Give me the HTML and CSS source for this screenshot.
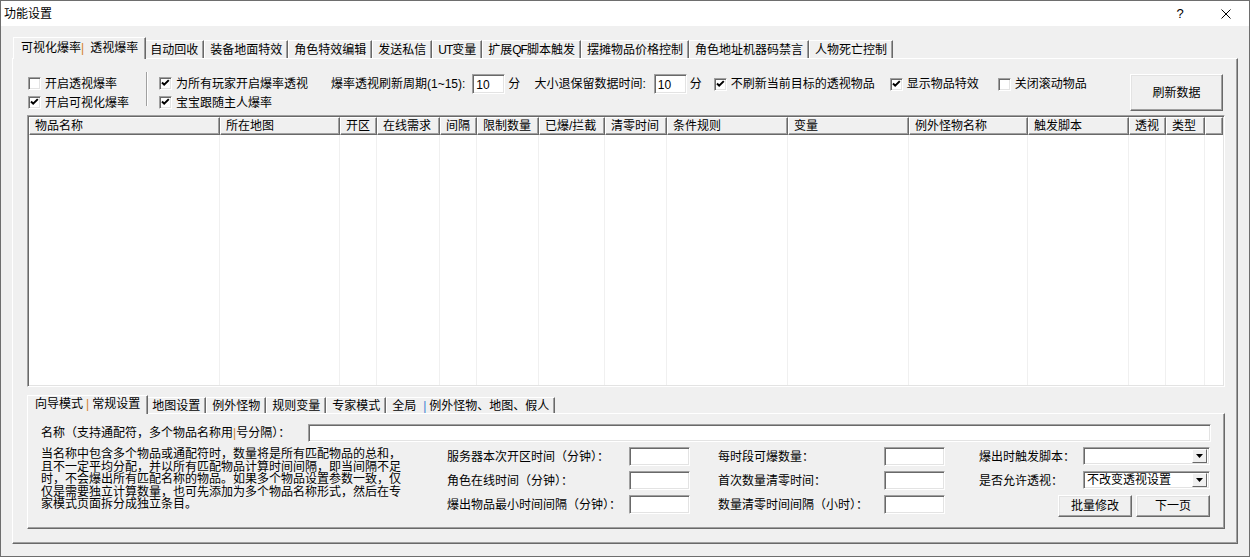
FILE: index.html
```html
<!DOCTYPE html>
<html lang="zh-CN">
<head>
    <meta charset="UTF-8">
    <title>功能设置</title>
    <link rel="stylesheet" href="styles.css">
</head>
<body>
<div class="window">
    <div class="titlebar">
        <span class="title">功能设置</span>
        <span class="cap-btn">?</span>
        <span class="cap-btn">
            <svg width="10" height="10" viewBox="0 0 10 10"><path d="M0.5 0.5 L9.5 9.5 M9.5 0.5 L0.5 9.5" stroke="#000" stroke-width="1" fill="none"/></svg>
        </span>
    </div>

    <div class="client">
        <div class="tabs outer-tabs">
            <div class="tab active">可视化爆率<span class="pipe wide">|</span>透视爆率</div>
            <div class="tab">自动回收</div>
            <div class="tab">装备地面特效</div>
            <div class="tab">角色特效编辑</div>
            <div class="tab">发送私信</div>
            <div class="tab"><span class="latin">UT</span>变量</div>
            <div class="tab">扩展<span class="latin">QF</span>脚本触发</div>
            <div class="tab">摆摊物品价格控制</div>
            <div class="tab">角色地址机器码禁言</div>
            <div class="tab">人物死亡控制</div>
        </div>

        <div class="page outer-page">
            <div class="options">
                <div class="check-col first-col">
                    <label class="check"><span class="box"></span>开启透视爆率</label>
                    <label class="check"><span class="box"><svg width="9" height="9" viewBox="0 0 9 9"><path d="M1 3.5 L3.2 5.7 L7.8 1.1" stroke="#000" stroke-width="2" fill="none"/></svg></span>开启可视化爆率</label>
                </div>
                <div class="vsep"></div>
                <div class="check-col second-col">
                    <label class="check"><span class="box"><svg width="9" height="9" viewBox="0 0 9 9"><path d="M1 3.5 L3.2 5.7 L7.8 1.1" stroke="#000" stroke-width="2" fill="none"/></svg></span>为所有玩家开启爆率透视</label>
                    <label class="check"><span class="box"><svg width="9" height="9" viewBox="0 0 9 9"><path d="M1 3.5 L3.2 5.7 L7.8 1.1" stroke="#000" stroke-width="2" fill="none"/></svg></span>宝宝跟随主人爆率</label>
                </div>
                <div class="opt-line">
                    <span>爆率透视刷新周期(1~15):</span>
                    <span class="edit num">10</span>
                    <span class="unit">分</span>
                    <span class="keep-label">大小退保留数据时间:</span>
                    <span class="edit num keep">10</span>
                    <span class="unit">分</span>
                    <label class="check inline c1"><span class="box"><svg width="9" height="9" viewBox="0 0 9 9"><path d="M1 3.5 L3.2 5.7 L7.8 1.1" stroke="#000" stroke-width="2" fill="none"/></svg></span>不刷新当前目标的透视物品</label>
                    <label class="check inline c2"><span class="box"><svg width="9" height="9" viewBox="0 0 9 9"><path d="M1 3.5 L3.2 5.7 L7.8 1.1" stroke="#000" stroke-width="2" fill="none"/></svg></span>显示物品特效</label>
                    <label class="check inline c3"><span class="box"></span>关闭滚动物品</label>
                </div>
                <button class="btn refresh">刷新数据</button>
            </div>

            <div class="list">
                <div class="list-head">
                    <div class="th">物品名称</div>
                    <div class="th">所在地图</div>
                    <div class="th">开区</div>
                    <div class="th">在线需求</div>
                    <div class="th">间隔</div>
                    <div class="th">限制数量</div>
                    <div class="th">已爆/拦截</div>
                    <div class="th">清零时间</div>
                    <div class="th">条件规则</div>
                    <div class="th">变量</div>
                    <div class="th">例外怪物名称</div>
                    <div class="th">触发脚本</div>
                    <div class="th">透视</div>
                    <div class="th">类型</div>
                    <div class="th filler"></div>
                </div>
                <div class="list-body">
                    <div class="td"></div><div class="td"></div><div class="td"></div>
                    <div class="td"></div><div class="td"></div><div class="td"></div>
                    <div class="td"></div><div class="td"></div><div class="td"></div>
                    <div class="td"></div><div class="td"></div><div class="td"></div>
                    <div class="td"></div><div class="td"></div><div class="td last"></div>
                </div>
            </div>

            <div class="tabs inner-tabs">
                <div class="tab active">向导模式<span class="pipe">|</span>常规设置</div>
                <div class="tab">地图设置</div>
                <div class="tab">例外怪物</div>
                <div class="tab">规则变量</div>
                <div class="tab">专家模式</div>
                <div class="tab">全局<span class="pipe blue">|</span>例外怪物、地图、假人</div>
            </div>

            <div class="page inner-page">
                <div class="name-row">
                    <span class="name-label">名称（支持通配符，多个物品名称用<span class="pipe tight">|</span>号分隔）：</span>
                    <span class="edit name-edit"></span>
                </div>
                <div class="fields">
                    <p class="note">当名称中包含多个物品或通配符时，数量将是所有匹配物品的总和，且不一定平均分配，并以所有匹配物品计算时间间隔，即当间隔不足时，不会爆出所有匹配名称的物品。如果多个物品设置参数一致，仅仅是需要独立计算数量，也可先添加为多个物品名称形式，然后在专家模式页面拆分成独立条目。</p>
                    <div class="field-col col-b">
                        <span>服务器本次开区时间（分钟）：</span><span class="edit"></span>
                        <span>角色在线时间（分钟）：</span><span class="edit"></span>
                        <span>爆出物品最小时间间隔（分钟）：</span><span class="edit"></span>
                    </div>
                    <div class="field-col col-c">
                        <span>每时段可爆数量：</span><span class="edit"></span>
                        <span>首次数量清零时间：</span><span class="edit"></span>
                        <span>数量清零时间间隔（小时）：</span><span class="edit"></span>
                    </div>
                    <div class="field-col col-d">
                        <span>爆出时触发脚本：</span>
                        <span class="edit combo"><span class="combo-text"></span><span class="drop"><svg width="7" height="4" viewBox="0 0 7 4"><path d="M0 0 H7 L3.5 4 Z" fill="#000"/></svg></span></span>
                        <span>是否允许透视：</span>
                        <span class="edit combo"><span class="combo-text">不改变透视设置</span><span class="drop"><svg width="7" height="4" viewBox="0 0 7 4"><path d="M0 0 H7 L3.5 4 Z" fill="#000"/></svg></span></span>
                        <div class="actions">
                            <button class="btn">批量修改</button>
                            <button class="btn">下一页</button>
                        </div>
                    </div>
                </div>
            </div>
        </div>
    </div>
</div>
</body>
</html>
```

FILE: styles.css
```css
* {
    margin: 0;
    padding: 0;
    box-sizing: border-box;
}

body {
    width: 1250px;
    height: 557px;
    overflow: hidden;
    background: #f0f0f0;
    font-family: "Liberation Sans", "Noto Sans CJK SC", sans-serif;
    font-size: 12px;
    line-height: 14px;
    color: #000;
}

.window {
    width: 1250px;
    height: 557px;
    border: 1px solid #6e6e6e;
    display: flex;
    flex-direction: column;
}

/* title bar */
.titlebar {
    height: 25px;
    background: #fff;
    display: flex;
    align-items: center;
    padding-left: 3px;
}

.title {
    flex-grow: 1;
}

.cap-btn {
    width: 46px;
    height: 25px;
    display: flex;
    align-items: center;
    justify-content: center;
    font-size: 13px;
}

.client {
    flex-grow: 1;
    display: flex;
    flex-direction: column;
    padding: 11px 11px 12px 11px;
}

/* shared 3d borders */
.edit {
    display: inline-block;
    background: #fff;
    border: 1px solid;
    border-color: #a0a0a0 #fff #fff #a0a0a0;
    box-shadow: inset 1px 1px #696969, inset -1px -1px #e3e3e3;
}

.btn {
    font: inherit;
    background: #f0f0f0;
    border: 1px solid;
    border-color: #fff #696969 #696969 #fff;
    box-shadow: inset -1px -1px #a0a0a0, inset 1px 1px #e3e3e3;
    color: #000;
}

.page {
    border: 1px solid;
    border-color: #fff #696969 #696969 #fff;
    box-shadow: inset -1px -1px #a0a0a0;
}

/* tabs */
.tabs {
    display: flex;
    align-items: flex-end;
}

.tab {
    height: 18px;
    padding: 0 5px;
    display: flex;
    align-items: center;
    white-space: nowrap;
    border: 1px solid;
    border-bottom: none;
    border-color: #fff #696969 #fff #fff;
    box-shadow: inset -1px 0 #a0a0a0;
}

.tab.active {
    position: relative;
    height: 22px;
    margin: 0 -2px -1px -2px;
    padding: 0 7px 1px 7px;
    background: #f0f0f0;
}

.latin {
    letter-spacing: -1px;
}

.outer-tabs {
    height: 21px;
    padding-left: 3px;
}

.pipe {
    color: #d4822c;
    margin: 0 3px;
}

.pipe.wide {
    margin: 0 6px 0 0;
}

.pipe.tight {
    margin: 0;
}

.pipe.blue {
    color: #3d7fd1;
    margin: 0 3px 0 7px;
}

.outer-page {
    flex-grow: 1;
    display: flex;
    flex-direction: column;
    padding: 15px 12px 14px 14px;
}

/* option row */
.options {
    height: 41px;
    display: flex;
    align-items: flex-start;
}

.check-col {
    display: flex;
    flex-direction: column;
}

.first-col {
    width: 118px;
    margin-left: 1px;
}

.second-col {
    width: 172px;
    margin-left: 11px;
}

.check {
    height: 19px;
    display: flex;
    align-items: center;
    white-space: nowrap;
}

.box {
    width: 13px;
    height: 13px;
    margin-right: 4px;
    background: #fff;
    border: 1px solid;
    border-color: #a0a0a0 #fff #fff #a0a0a0;
    box-shadow: inset 1px 1px #696969, inset -1px -1px #e3e3e3;
    display: flex;
    align-items: center;
    justify-content: center;
}

.vsep {
    width: 2px;
    height: 34px;
    margin-top: -2px;
    border-left: 1px solid #a0a0a0;
    border-right: 1px solid #fff;
}

.opt-line {
    height: 20px;
    display: flex;
    align-items: center;
    white-space: nowrap;
}

.edit.num {
    width: 33px;
    height: 20px;
    margin-left: 7px;
    padding: 3px 0 0 3px;
}

.edit.num.keep {
    margin-left: 8px;
}

.unit {
    margin-left: 3px;
}

.keep-label {
    margin-left: 14px;
}

.check.inline.c1 {
    margin-left: 12px;
}

.check.inline.c2 {
    margin-left: 15px;
}

.check.inline.c3 {
    margin-left: 19px;
}

.refresh {
    width: 93px;
    height: 37px;
    margin-left: auto;
    margin-right: 2px;
}

/* list view */
.list {
    height: 272px;
    background: #fff;
    border: 1px solid;
    border-color: #a0a0a0 #fff #fff #a0a0a0;
    box-shadow: inset 1px 1px #696969, inset -1px -1px #e3e3e3;
    padding: 1px;
    display: flex;
    flex-direction: column;
}

.list-head,
.list-body {
    display: grid;
    grid-template-columns: 191px 120px 37px 63px 37px 62px 66px 62px 121px 121px 119px 101px 37px 39px 1fr;
}

.th {
    height: 18px;
    padding-left: 5px;
    display: flex;
    align-items: center;
    white-space: nowrap;
    background: #f0f0f0;
    border-left: 1px solid #fff;
    border-top: 1px solid #fff;
    border-right: 1px solid #696969;
    border-bottom: 1px solid #696969;
    box-shadow: inset -1px -1px #a0a0a0;
}

.list-body {
    flex-grow: 1;
}

.td {
    border-right: 1px solid #f0f0f0;
}

.td.last {
    border-right: none;
}

/* lower tabs */
.inner-tabs {
    height: 18px;
    margin-top: 8px;
    padding-left: 2px;
}

.inner-tabs .tab {
    height: 16px;
}

.inner-tabs .tab.active {
    height: 19px;
    padding-bottom: 2px;
}

.inner-page {
    height: 116px;
    padding: 10px 13px 0 13px;
}

.name-row {
    height: 18px;
    display: flex;
    align-items: center;
}

.name-label {
    width: 267px;
    white-space: nowrap;
}

.name-edit {
    flex-grow: 1;
    height: 18px;
}

.fields {
    display: flex;
    margin-top: 5px;
}

.note {
    width: 406px;
    padding-right: 42px;
    line-height: 12.6px;
    margin-top: 1px;
}

.field-col {
    display: grid;
    grid-auto-rows: 24px;
    align-items: start;
    white-space: nowrap;
}

.field-col > span:not(.edit) {
    height: 19px;
    display: flex;
    align-items: center;
}

.field-col .edit {
    height: 19px;
}

.col-b {
    grid-template-columns: 182px 61px;
}

.col-c {
    grid-template-columns: 166px 61px;
    margin-left: 28px;
}

.col-d {
    grid-template-columns: 104px 127px;
    margin-left: 34px;
}

.edit.combo {
    height: 18px;
    display: flex;
    align-items: center;
    padding: 2px;
}

.combo-text {
    flex-grow: 1;
    padding-left: 1px;
}

.drop {
    width: 15px;
    height: 14px;
    background: #f0f0f0;
    border: 1px solid;
    border-color: #fff #696969 #696969 #fff;
    display: flex;
    align-items: center;
    justify-content: center;
}

.actions {
    grid-column: 1 / 3;
    display: flex;
    justify-content: flex-end;
    gap: 4px;
}

.actions .btn {
    width: 74px;
    height: 22px;
}
```
